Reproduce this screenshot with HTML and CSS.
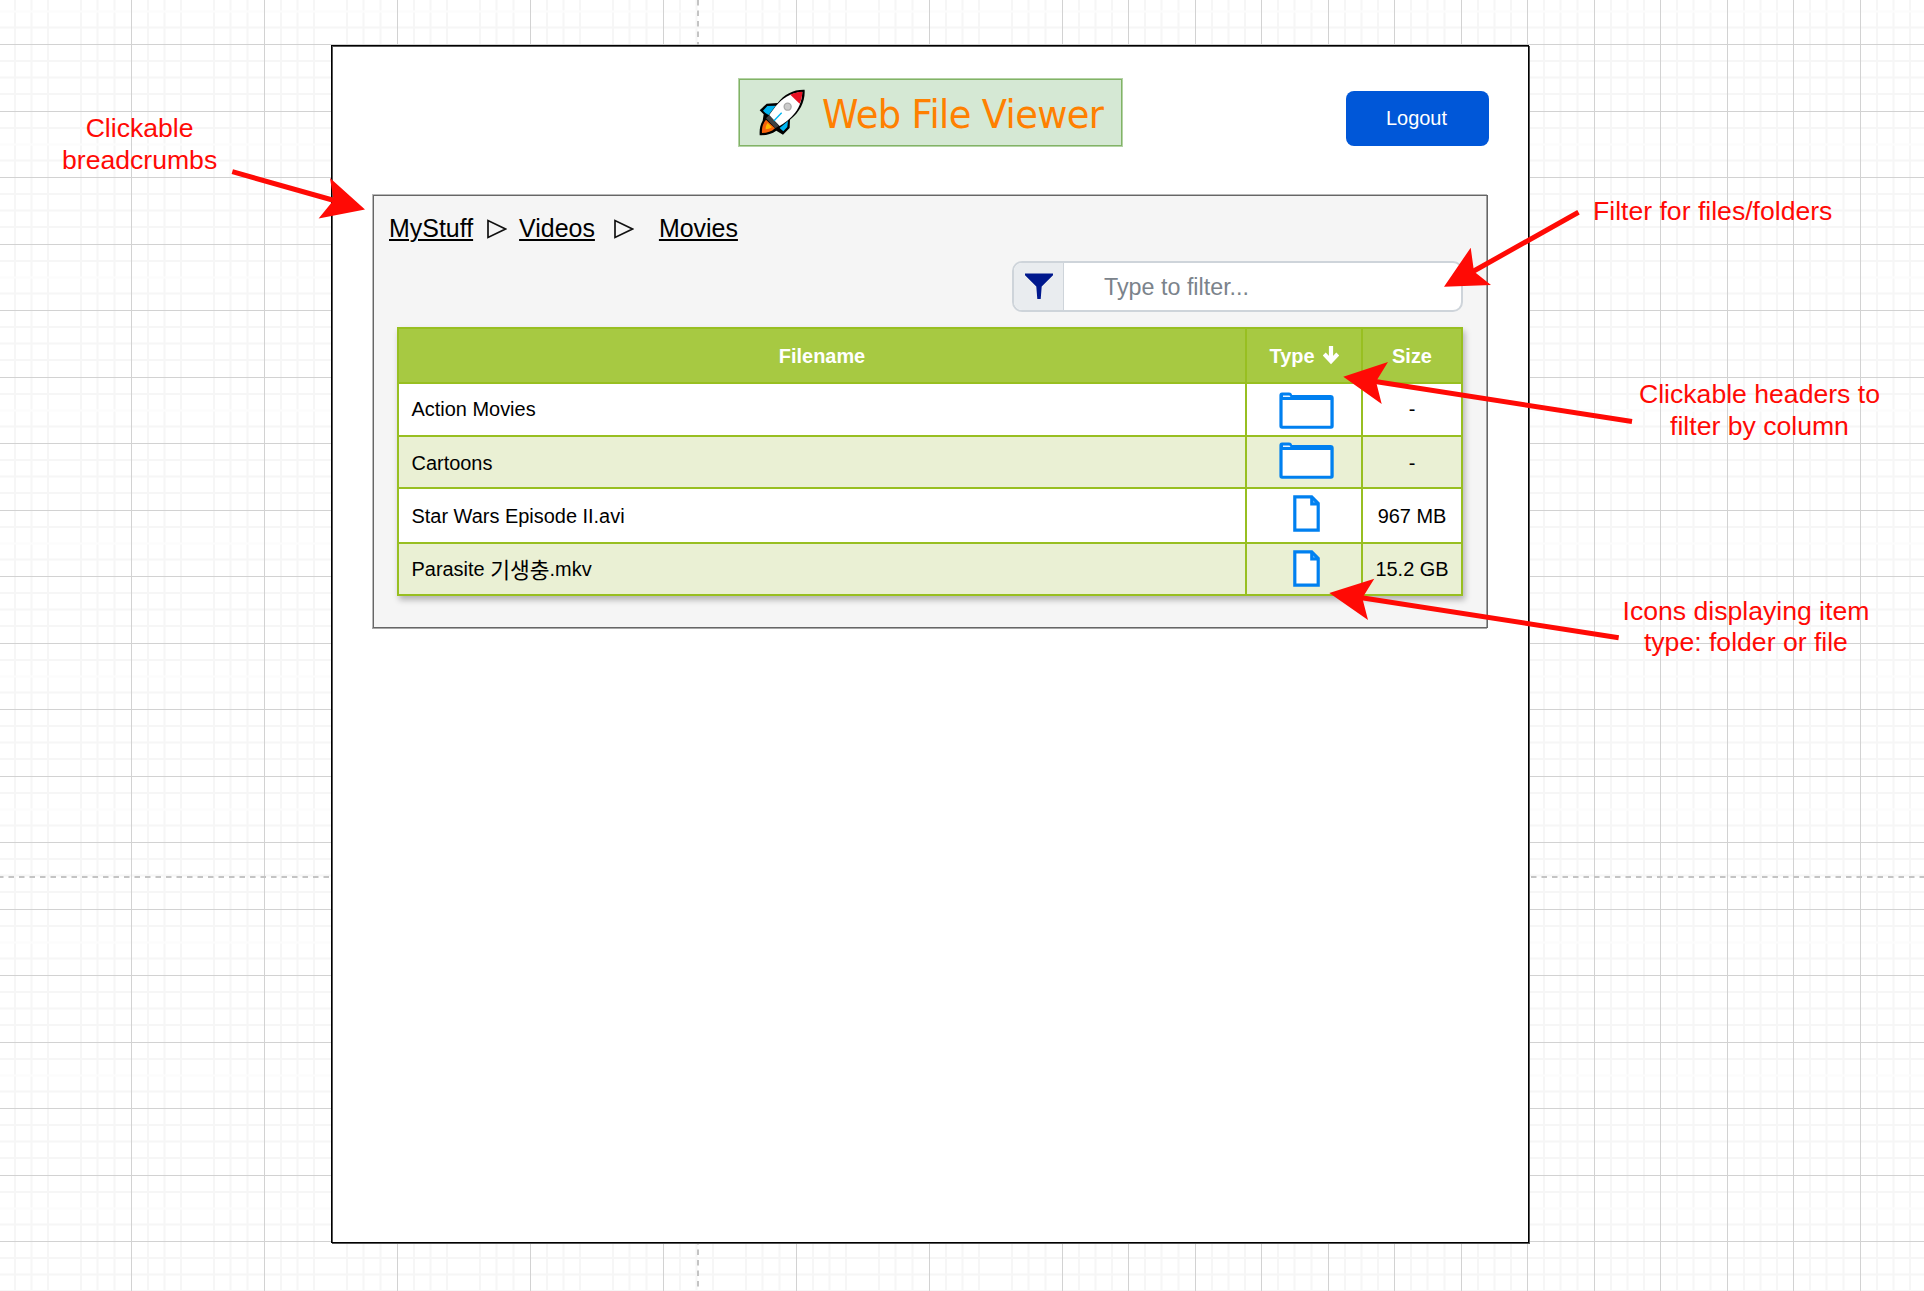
FILE: index.html
```html
<!DOCTYPE html>
<html lang="en">
<head>
<meta charset="utf-8">
<title>Web File Viewer</title>
<link rel="stylesheet" href="styles.css">
</head>
<body>
<svg class="canvas-grid" width="1924" height="1291" aria-hidden="true">
  <defs>
    <pattern id="grid" x="131" y="44" width="133" height="133" patternUnits="userSpaceOnUse">
      <path class="minor" d="M17 0V133M33.5 0V133M50 0V133M83 0V133M99.5 0V133M116.5 0V133M0 17H133M0 33.5H133M0 50H133M0 84H133M0 116.5H133"/>
      <path class="faint" d="M0 100.5H133"/>
      <path class="major" d="M0.5 0V133M0 0.5H133M0 67.5H133"/>
    </pattern>
    <pattern id="grid-extra" x="1062" y="44" width="133" height="133" patternUnits="userSpaceOnUse">
      <path class="major" d="M66.5 0V133"/>
    </pattern>
  </defs>
  <rect width="1924" height="1291" fill="url(#grid)"/>
  <rect x="1062" width="862" height="1291" fill="url(#grid-extra)"/>
  <path class="page-break" stroke-dashoffset="2" d="M0 877H1924"/>
  <path class="page-break" stroke-dashoffset="0" d="M698 0V1291"/>
</svg>

<svg class="symbols" width="0" height="0" aria-hidden="true">
  <symbol id="folder" viewBox="0 0 55 37">
    <path fill="#0080f0" d="M3 0.6H10Q12.5 0.6 13.2 3H51.5Q54.7 3 54.7 6V34Q54.7 36.8 52 36.8H3Q0.4 36.8 0.4 34V3.5Q0.4 .6 3 .6Z"/>
    <path fill="#fff" d="M3.6 8H51.4V33.7H3.6Z"/>
    <path fill="#e4f2ff" d="M4 3.4H10.5L11.5 5H4Z"/>
  </symbol>
  <symbol id="file" viewBox="0 0 27 37">
    <path fill="#fff" stroke="#0080f0" stroke-width="3.2" d="M1.8 1.8H18.7L25.2 8.3V35.2H1.8Z"/>
    <path fill="#0080f0" d="M17.2 2H19.5L25 7.5V10.4H17.2Z"/>
    <path fill="#5ab0f8" d="M20 5.4L22.3 7.4H20Z"/>
  </symbol>
</svg>

<main class="page">
  <header class="top">
    <h1 class="title">
      <svg class="rocket" viewBox="118 92 139 140">
        <path d="M255 94C222 93 194 107 174 134L141 136L120 156L132 168L129 187C121 200 119 214 120 231C139 231 156 227 170 217L190 229L210 209L211 184C242 160 257 128 255 94Z"/>
        <path fill="#00b4f0" d="M143 143L168 142L147 170L137 164L130 157ZM205 188L203 206L191 219L180 209Z"/>
        <path fill="#fff" d="M248 101C212 104 188 120 168 144L148 171L180 203C203 189 246 160 248 101Z"/>
        <path fill="#e81224" d="M248 100C235 101 222 104 212 109L240 136C245 125 248 113 248 100Z"/>
        <path fill="#404040" d="M149 170L178 203L167 210L139 180Z"/>
        <path fill="#f7630c" d="M139 184C129 196 126 209 127 224C143 224 156 220 166 210Z"/>
        <path fill="#ffb900" d="M144 194C139 200 138 205 138 213C145 212 151 211 157 207Z"/>
        <path fill="none" stroke="#00b4f0" stroke-width="4" d="M186 163L163 187"/>
        <circle cx="204" cy="145" r="10.5" fill="#ccc" stroke="#aaa" stroke-width="4"/>
      </svg>
      <span class="title-text">Web File Viewer</span>
    </h1>
    <button class="logout">Logout</button>
  </header>

  <section class="panel">
    <nav class="crumbs">
      <a>MyStuff</a>
      <svg class="sep first" viewBox="0 0 20 20"><path d="M1 1.5V18.5L18.5 10Z"/></svg>
      <a>Videos</a>
      <svg class="sep second" viewBox="0 0 20 20"><path d="M1 1.5V18.5L18.5 10Z"/></svg>
      <a>Movies</a>
    </nav>
    <div class="filter">
      <span class="filter-icon"><svg width="28" height="27" viewBox="0 0 28 27"><path fill="#00188d" d="M0 .5H28V2.2L16.7 13.5L15.7 26H12.3L11.3 13.5L0 2.2Z"/></svg></span>
      <span class="filter-input">Type to filter...</span>
    </div>
    <div class="files">
      <div class="cell head">Filename</div>
      <div class="cell head type">Type <svg class="arrow-down" width="16" height="19" viewBox="0 0 16 19"><path d="M8 0V16M1.2 8L8 15.2L14.8 8" fill="none" stroke="#fff" stroke-width="4.2"/></svg></div>
      <div class="cell head">Size</div>

      <div class="cell name">Action Movies</div>
      <div class="cell"><svg class="folder f1"><use href="#folder"/></svg></div>
      <div class="cell">-</div>

      <div class="cell name alt low">Cartoons</div>
      <div class="cell alt"><svg class="folder f2"><use href="#folder"/></svg></div>
      <div class="cell alt low">-</div>

      <div class="cell name mid">Star Wars Episode II.avi</div>
      <div class="cell"><svg class="file"><use href="#file"/></svg></div>
      <div class="cell mid">967 MB</div>

      <div class="cell name alt mid">Parasite&nbsp;<span class="hangul">기생충</span>.mkv</div>
      <div class="cell alt"><svg class="file"><use href="#file"/></svg></div>
      <div class="cell alt mid">15.2 GB</div>
    </div>
  </section>
</main>

<p class="note n1">Clickable<br>breadcrumbs</p>
<p class="note n2">Filter for files/folders</p>
<p class="note n3">Clickable headers to<br>filter by column</p>
<p class="note n4">Icons displaying item<br>type: folder or file</p>

<svg class="arrows" width="1924" height="1291" aria-hidden="true">
  <path class="shaft" d="M232.3 171.7L336 201M1578.5 212.2L1472 272M1632 421.5L1372 381M1618.7 637.7L1360 597.5"/>
  <path class="tip" d="M365 209.5L330 178L333.5 200.3L318.6 218.5ZM1444 286.7L1470.7 247.7L1474 271.5L1491 285ZM1343.3 376.8L1388 362L1376 381.5L1381.7 404ZM1329.3 593L1374.3 578.7L1362.3 598L1368 620Z"/>
</svg>
</body>
</html>
```
FILE: styles.css
```css
* { box-sizing: border-box; }
body {
  margin: 0;
  width: 1924px;
  height: 1291px;
  overflow: hidden;
  position: relative;
  background: #fff;
  color: #000;
  font-family: "Liberation Sans", Arial, sans-serif;
}
svg { display: block; flex: none; }

.canvas-grid, .arrows { position: absolute; left: 0; top: 0; }
.symbols { position: absolute; }
.minor { stroke: #f6f6f6; stroke-width: 2; fill: none; }
.faint { stroke: #fcfcfc; stroke-width: 2; }
.major { stroke: #d2d2d2; stroke-width: 1; fill: none; }
.page-break { stroke: #c4c4c4; stroke-width: 2; stroke-dasharray: 5.5 5; }

.page {
  position: relative;
  width: 1198px;
  height: 1198px;
  margin: 45px 0 0 331px;
  background: #fff;
  border: 1px solid #000;
  box-shadow: 1px 1px 0 #555, inset 1px 1px 0 #555;
}
.top {
  display: flex;
  justify-content: space-between;
  align-items: flex-start;
  padding: 33px 39px 0 407px;
  height: 149px;
}
.title {
  display: flex;
  align-items: center;
  width: 383px;
  height: 67px;
  margin: 0;
  padding-left: 19px;
  background: #d5e8d4;
  border: 1px solid #82b366;
  box-shadow: 0 0 0 1px #b4d3a6;
}
.rocket { width: 46.3px; height: 46.7px; }
.title-text {
  margin-left: 17px;
  padding-top: 2px;
  font: 400 39.9px "DejaVu Sans", sans-serif;
  letter-spacing: -0.7px;
  transform: scaleX(.925);
  transform-origin: left center;
  white-space: nowrap;
  color: #ff8000;
}
.logout {
  width: 143px;
  height: 55px;
  margin-top: 11.5px;
  padding: 1px 2px 0 0;
  border: 0;
  border-radius: 8px;
  background: #0057d8;
  color: #fff;
  font: 19.95px "Liberation Sans", sans-serif;
}

.panel {
  width: 1115px;
  height: 433px;
  margin-left: 41px;
  padding: 18px 24px 0 15px;
  background: #f5f5f5;
  border: 1px solid #666;
  box-shadow: -1px -1px 0 #b8b8b8, -1px 1px 0 #a8a8a8, inset -1px 0 0 #a0a0a0;
}
.crumbs {
  display: flex;
  align-items: flex-start;
  height: 47px;
  font-size: 24.94px;
  line-height: 28px;
}
.crumbs a {
  text-decoration: underline;
  text-decoration-skip-ink: auto;
  text-decoration-thickness: 2px;
  text-underline-offset: 2px;
}
.sep { width: 20px; height: 20px; margin-top: 5px; fill: none; stroke: #111; stroke-width: 1.7; }
.first { margin-left: 14px; margin-right: 12px; }
.second { margin-left: 19px; margin-right: 25px; }

.filter {
  display: flex;
  width: 451px;
  height: 51px;
  margin-left: auto;
  border: 2px solid #ced4da;
  border-radius: 10px;
  background: #fff;
  overflow: hidden;
}
.filter-icon {
  width: 50px;
  background: #e9ecef;
  border-right: 1px solid #ced4da;
  padding: 10px 0 0 11px;
}
.filter-input {
  padding: 0 0 0 40px;
  font-size: 23.3px;
  line-height: 48px;
  color: #7b838b;
}

.files {
  display: grid;
  grid-template-columns: 846px 114px 98px;
  grid-template-rows: 53px 51px 50px 53px 50px;
  gap: 2px;
  width: 1066px;
  margin: 15px 0 0 8px;
  padding: 2px;
  background: #98bf21;
  box-shadow: 2px 4px 6px rgba(0, 0, 0, .27);
  font-size: 19.95px;
}
.cell {
  display: flex;
  align-items: center;
  justify-content: center;
  background: #fff;
  white-space: nowrap;
}
.name { justify-content: flex-start; padding-left: 12.5px; }
.alt { background: #eaf0d4; }
.low { padding-top: 3px; }
.mid { padding-top: 1px; }
.head { background: #a7c942; color: #fff; font-weight: 700; padding-top: 2px; }
.type { gap: 8px; }
.arrow-down { margin-top: -2px; }
.folder { width: 55px; height: 37px; margin-left: 5px; }
.f1 { margin-top: 1px; }
.f2 { margin-top: -4px; }
.file { width: 27px; height: 37px; margin: -4px 0 0 5px; }
.alt .file { margin-top: -2px; }
.hangul { position: relative; top: -1px; font-family: "Noto Sans CJK KR", sans-serif; font-size: 21.5px; line-height: 20px; }

.note {
  position: absolute;
  margin: 0;
  color: #ff0a05;
  font-size: 26.6px;
  line-height: 32px;
  text-align: center;
  white-space: nowrap;
}
.n1 { left: 62px; top: 112px; }
.n2 { left: 1593px; top: 195px; }
.n3 { left: 1639px; top: 378px; }
.n4 { left: 1622.5px; top: 595.5px; line-height: 31px; }
.shaft { stroke: #ff0a05; stroke-width: 5; fill: none; }
.tip { fill: #ff0a05; }
```
